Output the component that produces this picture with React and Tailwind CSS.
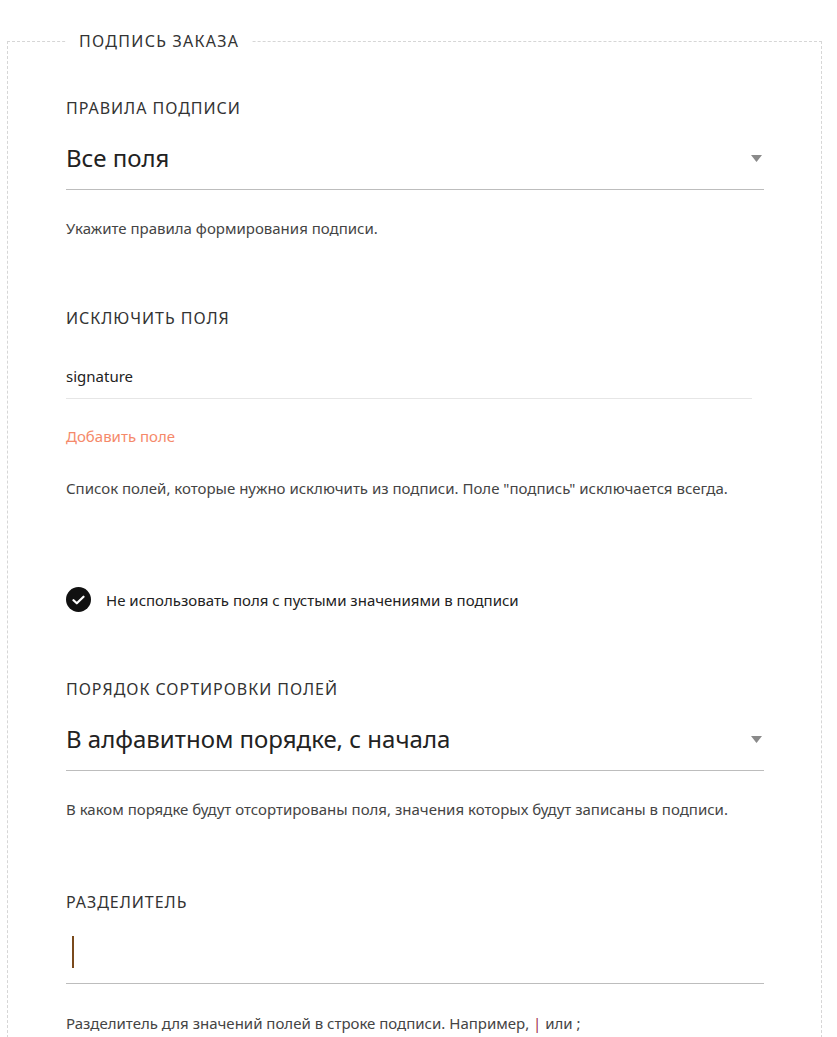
import { useState } from 'react'

function Arrow() {
  return (
    <svg width="11" height="7" viewBox="0 0 11 7" className="shrink-0">
      <path d="M0 0 L11 0 L5.5 7 Z" fill="#8a8a8a" />
    </svg>
  )
}

function Label({ children }) {
  return (
    <div className="text-[16px] leading-[20px] uppercase tracking-[0.06em] text-[#333]">{children}</div>
  )
}

function Hint({ children }) {
  return <p className="text-[15px] leading-[20px] text-[#444]">{children}</p>
}

function SelectField({ value }) {
  return (
    <div className="flex items-center justify-between border-b border-[#bdbdbd] h-[63px] pr-[2px]">
      <span className="text-[24px] leading-[32px] text-[#222]">{value}</span>
      <Arrow />
    </div>
  )
}

export default function App() {
  const [skipEmpty, setSkipEmpty] = useState(true)

  return (
    <div className="bg-white min-h-screen pt-[28px] px-[7px] text-[#333]" style={{ fontFamily: '"Noto Sans", "Liberation Sans", sans-serif' }}>
      <fieldset className="border border-dashed border-[#d6d6d6] border-b-0 pl-[58px] pr-[57px] pb-[40px] w-[815px]">
        <legend className="px-[13px] text-[16px] leading-[26px] uppercase tracking-[0.08em] text-[#333]">
          Подпись заказа
        </legend>

        {/* Правила подписи */}
        <div className="pt-[44px]">
          <Label>Правила подписи</Label>
          <div className="mt-[9px]">
            <SelectField value="Все поля" />
          </div>
          <div className="mt-[28px]">
            <Hint>Укажите правила формирования подписи.</Hint>
          </div>
        </div>

        {/* Исключить поля */}
        <div className="pt-[70px]">
          <Label>Исключить поля</Label>
          <div className="mt-[36px] mr-[12px] border-b border-[#e6e6e6] pb-[10px]">
            <span className="text-[15px] leading-[20px] text-[#222]">signature</span>
          </div>
          <button className="mt-[27px] text-[15px] leading-[20px] text-[#f5896a]">Добавить поле</button>
          <div className="mt-[30px]">
            <Hint>Список полей, которые нужно исключить из подписи. Поле "подпись" исключается всегда.</Hint>
          </div>
        </div>

        {/* Checkbox */}
        <label className="mt-[89px] flex items-center gap-[15px] cursor-pointer" onClick={() => setSkipEmpty(!skipEmpty)}>
          <span className="w-[25px] h-[25px] rounded-full bg-[#111] flex items-center justify-center">
            {skipEmpty && (
              <svg width="13" height="10" viewBox="0 0 13 10">
                <path d="M1.5 5.2 L4.8 8.3 L11.5 1.7" fill="none" stroke="white" strokeWidth="2.2" strokeLinecap="round" strokeLinejoin="round" />
              </svg>
            )}
          </span>
          <span className="text-[15px] leading-[20px] text-[#222]">Не использовать поля с пустыми значениями в подписи</span>
        </label>

        {/* Порядок сортировки */}
        <div className="pt-[67px]">
          <Label>Порядок сортировки полей</Label>
          <div className="mt-[9px]">
            <SelectField value="В алфавитном порядке, с начала" />
          </div>
          <div className="mt-[28px]">
            <Hint>В каком порядке будут отсортированы поля, значения которых будут записаны в подписи.</Hint>
          </div>
        </div>

        {/* Разделитель */}
        <div className="pt-[73px]">
          <Label>Разделитель</Label>
          <div className="mt-[9px] border-b border-[#bdbdbd] h-[63px] flex items-center pl-[6px]">
            <span className="block w-[2px] h-[32px] bg-[#7a4a1c]" />
          </div>
          <div className="mt-[29px]">
            <Hint>
              Разделитель для значений полей в строке подписи. Например, <span className="text-[#a0304a]">|</span> или ;
            </Hint>
          </div>
        </div>
      </fieldset>
    </div>
  )
}
